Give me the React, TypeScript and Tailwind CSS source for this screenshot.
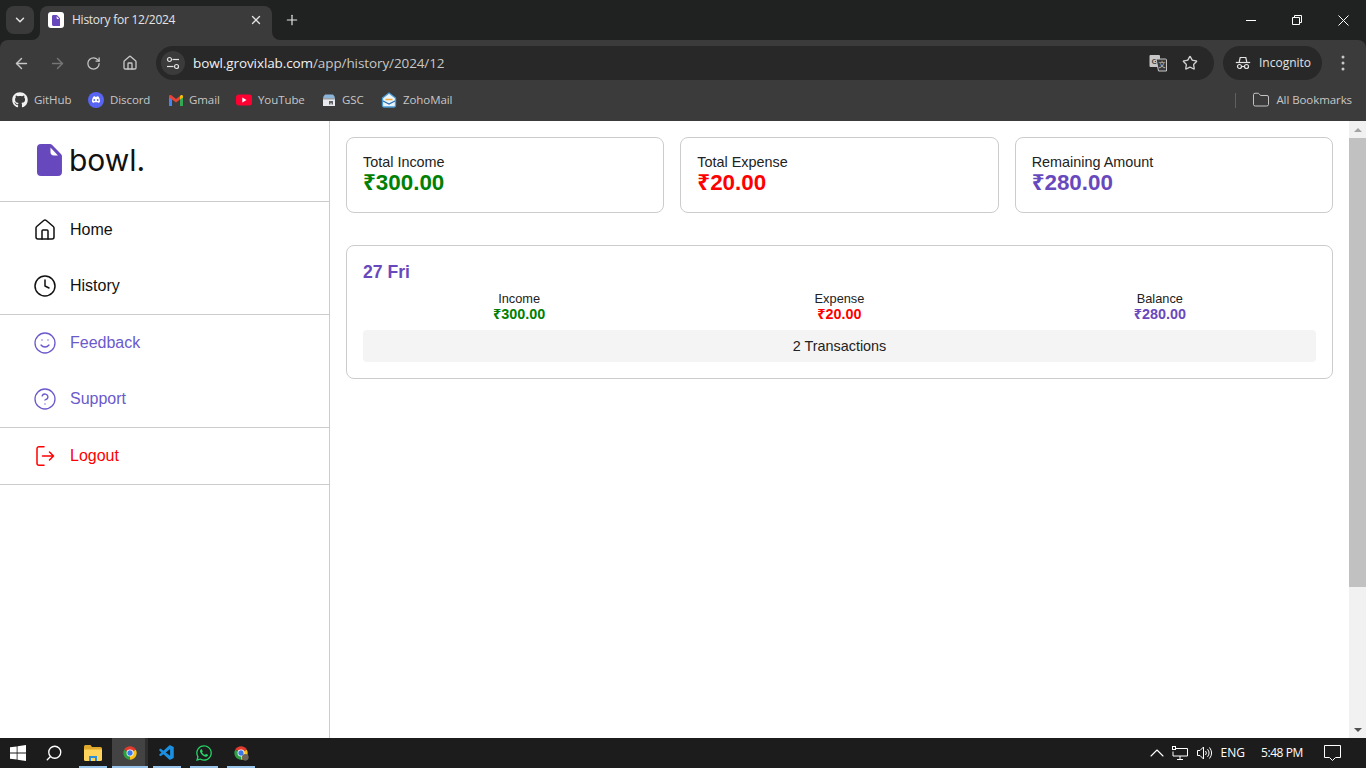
import React from "react";
import { ChevronDown, X, Plus, ArrowLeft, ArrowRight, RotateCw, House, Star, Clock, Smile, CircleHelp, Folder, ChevronUp, Search } from "lucide-react";
import { FaGithub, FaWhatsapp } from "react-icons/fa";
import { VscVscode } from "react-icons/vsc";

const ui = "font-['Open_Sans','Noto_Sans',sans-serif]";

function LogoGlyph({ size = 26, fold = "#ffffff" }: { size?: number; fold?: string }) {
  return (
    <svg width={size * 0.78} height={size} viewBox="0 0 25 32">
      <path d="M4 0h9a3 3 0 0 1 2.200 1l8.800 9a3 3 0 0 1 1 2v16a4 4 0 0 1-4 4H4a4 4 0 0 1-4-4V4a4 4 0 0 1 4-4z" fill="#6849bd" />
      <path d="M13.500 3.500L21 11.500h-4a3.500 3.500 0 0 1-3.500-3.500z" fill={fold} />
    </svg>
  );
}

function ChromeIcon({ size = 16, badge = false }: { size?: number; badge?: boolean }) {
  return (
    <svg width={size} height={size} viewBox="0 0 24 24">
      <path d="M12 12L3.340 7A10 10 0 0 1 20.660 7z" fill="#e33b2e" />
      <path d="M12 12L20.660 7A10 10 0 0 1 12 22z" fill="#fbc116" />
      <path d="M12 12L12 22A10 10 0 0 1 3.340 7z" fill="#2f9e44" />
      <circle cx="12" cy="12" r="5.200" fill="#fff" />
      <circle cx="12" cy="12" r="4" fill="#3b78e7" />
      {badge && <circle cx="18.500" cy="18.500" r="5" fill="#6b655c" />}
    </svg>
  );
}

function DiscordIcon() {
  return (
    <svg width="16" height="16" viewBox="0 0 16 16">
      <circle cx="8" cy="8" r="8" fill="#5865f2" />
      <path d="M5.300 4.700c.8-.3 1.300-.4 1.600-.4l.2.400h1.800l.2-.4c.3 0 .8.100 1.600.4 1 1.500 1.400 3.300 1.300 5.300-.6.500-1.300.8-2 1l-.5-.8c.3-.1.500-.2.700-.4-1.500.7-3 .7-4.400 0 .2.200.4.300.7.400l-.5.800c-.7-.2-1.400-.5-2-1-.1-2 .3-3.800 1.300-5.300z" fill="#fff" />
      <circle cx="6.300" cy="8" r=".9" fill="#5865f2" />
      <circle cx="9.700" cy="8" r=".9" fill="#5865f2" />
    </svg>
  );
}

function GmailIcon() {
  return (
    <svg width="14" height="11" viewBox="0 0 14 11">
      <path d="M0 1.500V11h3V4z" fill="#4285f4" />
      <path d="M14 1.500V11h-3V4z" fill="#34a853" />
      <path d="M0 1.500C0 .2 1.300-.4 2.300.3L7 3.900l4-3V4.500L7 7.500 3 4.500 0 2.500z" fill="#ea4335" />
      <path d="M11 .9l.7-.6c1-.7 2.300-.1 2.300 1.200v1L11 4.500z" fill="#fbbc04" />
    </svg>
  );
}

function YoutubeIcon() {
  return (
    <svg width="16" height="12" viewBox="0 0 16 12">
      <rect width="16" height="11" y=".5" rx="3" fill="#ff0033" />
      <path d="M6.300 3.500v5L10.500 6z" fill="#fff" />
    </svg>
  );
}

function GscIcon() {
  return (
    <svg width="14" height="14" viewBox="0 0 14 14">
      <path d="M1.500 3.500L3 1.500h8l1.500 2 .5 2.500H1z" fill="#8ab4d8" />
      <path d="M1 6h12v7H1z" fill="#e8eaed" />
      <path d="M1 5h12v1.500H1z" fill="#9aa0a6" />
      <path d="M7 8h4v3.500H9.500V10H8.500v1.500H7z" fill="#5f6368" />
    </svg>
  );
}

function ZohoIcon() {
  return (
    <svg width="16" height="16" viewBox="0 0 16 16">
      <path d="M1.500 6L8 1l6.500 5v7.500a1.500 1.500 0 0 1-1.500 1.500H3a1.500 1.500 0 0 1-1.500-1.500z" fill="#eaf4fb" stroke="#4a9bd8" strokeWidth="1.300" />
      <path d="M4.500 7.500h7" stroke="#f2a93b" strokeWidth="1.500" />
      <path d="M2 9l6 3 6-3" fill="none" stroke="#2a6fb0" strokeWidth="1.200" />
    </svg>
  );
}

function IncognitoIcon() {
  return (
    <svg width="16" height="16" viewBox="0 0 16 16" fill="none" stroke="#e3e3e3" strokeWidth="1.200">
      <path d="M4.200 7l1-4.500h5.600l1 4.500" />
      <path d="M.8 7.500h14.400" />
      <circle cx="4.500" cy="11.500" r="2" />
      <circle cx="11.500" cy="11.500" r="2" />
      <path d="M6.500 11.500h3" />
    </svg>
  );
}

function TranslateIcon() {
  return (
    <svg width="18" height="18" viewBox="0 0 18 18">
      <rect x="0.500" y="1" width="10.500" height="12" rx="1" fill="#c7c7c7" />
      <text x="5.500" y="10" fontSize="8" fontWeight="700" textAnchor="middle" fill="#444" fontFamily="Liberation Sans, sans-serif">G</text>
      <path d="M7 5h9.500a1 1 0 0 1 1 1v11h-8z" fill="#3b3b3b" stroke="#c7c7c7" strokeWidth="1" />
      <text x="13" y="13" fontSize="7" textAnchor="middle" fill="#c7c7c7" fontFamily="Noto Sans CJK SC, sans-serif">文</text>
    </svg>
  );
}

function TuneIcon() {
  return (
    <svg width="14" height="14" viewBox="0 0 14 14" fill="none" stroke="#e3e3e3" strokeWidth="1.200">
      <circle cx="3.500" cy="3.500" r="2" />
      <path d="M6.500 3.500H13" />
      <circle cx="10.500" cy="10.500" r="2" />
      <path d="M1 10.500h6.500" />
    </svg>
  );
}

function LogoutIcon() {
  return (
    <svg width="24" height="24" viewBox="0 0 24 24" fill="none" stroke="currentColor" strokeWidth="1.500" strokeLinecap="round" strokeLinejoin="round">
      <path d="M11 2.700H6a2 2 0 0 0-2 2v14.600a2 2 0 0 0 2 2h5" />
      <path d="M9.500 12h11M16.500 8l4 4-4 4" />
    </svg>
  );
}

function WindowsIcon() {
  return (
    <svg width="16" height="16" viewBox="0 0 16 16" fill="#fff">
      <path d="M0 2.300l6.700-.9v6.200H0zM7.500 1.300L16 0v7.600H7.500zM0 8.400h6.700v6.200L0 13.700zM7.500 8.400H16V16l-8.500-1.300z" />
    </svg>
  );
}

function FolderIcon() {
  return (
    <svg width="18" height="16" viewBox="0 0 18 16">
      <path d="M0 1.500A1.500 1.500 0 0 1 1.500 0h5L8 2h8.500A1.500 1.500 0 0 1 18 3.500V5H0z" fill="#e0a92b" />
      <path d="M0 4.500h18V14.500A1.500 1.500 0 0 1 16.500 16h-15A1.500 1.500 0 0 1 0 14.500z" fill="#ffd45c" />
      <path d="M5 11h8v5h-2v-3H7v3H5z" fill="#2e8fd6" />
    </svg>
  );
}

function NetworkIcon() {
  return (
    <svg width="16" height="14" viewBox="0 0 16 14" fill="none" stroke="#fff" strokeWidth="1">
      <path d="M4 2.500h11.500v7.500H1V5.500" />
      <path d="M8 10v3M5 13.500h6" />
      <rect x=".5" y=".5" width="3" height="3" fill="#1c1c1c" />
    </svg>
  );
}

function SpeakerIcon() {
  return (
    <svg width="16" height="14" viewBox="0 0 16 14" fill="none" stroke="#fff" strokeWidth="1">
      <path d="M.5 4.500h2.500L6.500 1v12L3 9.500H.5z" />
      <path d="M8.500 5a3 3 0 0 1 0 4M10.500 3.200a6 6 0 0 1 0 7.600M12.500 1.500a9 9 0 0 1 0 11" />
    </svg>
  );
}

function NotifyIcon() {
  return (
    <svg width="17" height="16" viewBox="0 0 17 16" fill="none" stroke="#fff" strokeWidth="1">
      <path d="M.5 .5h16v12h-5l-3 3-3-3h-5z" />
    </svg>
  );
}

const bookmarks = [
  { label: "GitHub", w: "w-[76px]", gap: "gap-[6px]", icon: <FaGithub size={16} color="#f1f1f1" /> },
  { label: "Discord", w: "w-[80px]", gap: "gap-[6px]", icon: <DiscordIcon /> },
  { label: "Gmail", w: "w-[68px]", gap: "gap-[5px]", icon: <GmailIcon /> },
  { label: "YouTube", w: "w-[85px]", gap: "gap-[6px]", icon: <YoutubeIcon /> },
  { label: "GSC", w: "w-[60px]", gap: "gap-[5px]", icon: <GscIcon /> },
  { label: "ZohoMail", w: "w-[80px]", gap: "gap-[6px]", icon: <ZohoIcon /> },
];

function BrowserChrome() {
  return (
    <header className={`shrink-0 bg-[#202221] ${ui}`}>
      <div className="flex h-10 items-end pl-[6px]">
        <div className="mb-[6px] flex h-7 w-7 items-center justify-center rounded-lg bg-[#3a3a3a]">
          <ChevronDown size={14} color="#e3e3e3" strokeWidth={2.500} />
        </div>
        <div className="relative ml-[6px] flex h-[34px] w-[232px] items-center rounded-t-lg bg-[#3b3b3b] pb-[6px] pl-2 pr-[9px] pt-0">
          <svg className="absolute -left-2 bottom-0" width="8" height="8" viewBox="0 0 8 8"><path d="M8 0v8H0a8 8 0 0 0 8-8z" fill="#3b3b3b" /></svg>
          <svg className="absolute -right-2 bottom-0" width="8" height="8" viewBox="0 0 8 8"><path d="M0 0v8h8a8 8 0 0 1-8-8z" fill="#3b3b3b" /></svg>
          <span className="flex h-4 w-4 items-center justify-center rounded-[3px] bg-white">
            <LogoGlyph size={11} />
          </span>
          <span className="ml-2 flex-1 text-xs text-[#e3e3e3] tracking-[-0.25px]">History for 12/2024</span>
          <X size={14} color="#e3e3e3" strokeWidth={2.200} />
        </div>
        <div className="mb-[6px] ml-[6px] flex h-7 w-7 items-center justify-center">
          <Plus size={16} color="#e3e3e3" strokeWidth={1.800} />
        </div>
        <div className="ml-auto flex h-full items-start text-white">
          <div className="flex h-10 w-[46px] items-center justify-center"><span className="h-px w-[10px] bg-white" /></div>
          <div className="flex h-10 w-[46px] items-center justify-center">
            <svg width="10" height="10" viewBox="0 0 10 10" fill="none" stroke="#fff"><path d="M.5 2.500h7v7h-7zM2.500 2.500v-2h7v7h-2" /></svg>
          </div>
          <div className="flex h-10 w-[46px] items-center justify-center">
            <svg width="11" height="11" viewBox="0 0 11 11" stroke="#fff"><path d="M.5 .5l10 10M10.500 .5l-10 10" /></svg>
          </div>
        </div>
      </div>
      <div className="rounded-t-lg bg-[#3b3b3b]">
        <div className="flex h-[41px] items-end px-[13px] pb-[1px]">
          <div className="flex h-[34px] w-[143px] items-center">
            <ArrowLeft size={17} color="#c7c7c7" className="w-[17px]" />
            <ArrowRight size={17} color="#757575" className="ml-[19px]" />
            <RotateCw size={15} color="#c7c7c7" className="ml-[20px]" />
            <House size={16} color="#c7c7c7" className="ml-[21px]" />
          </div>
          <div className="flex h-[34px] w-[1058px] items-center rounded-full bg-[#282828] pl-[5px] pr-[16px]">
            <span className="flex h-6 w-6 items-center justify-center rounded-full bg-[#3b3b3b]"><TuneIcon /></span>
            <span className="ml-2 flex-1 text-[13.500px] text-[#c7c7c7] tracking-[-0.1px]"><span className="text-[#f1f1f1]">bowl.grovixlab.com</span>/app/history/2024/12</span>
            <TranslateIcon />
            <Star size={16} color="#d0d0d0" className="ml-[15px]" />
          </div>
          <div className="ml-[9px] flex h-[34px] w-[99px] items-center gap-[8px] rounded-full bg-[#282828] pl-[12px]">
            <IncognitoIcon />
            <span className="text-xs text-[#e3e3e3]">Incognito</span>
          </div>
          <svg className="mb-[9px] ml-[19px]" width="4" height="16" viewBox="0 0 4 16" fill="#c7c7c7"><circle cx="2" cy="2" r="1.500" /><circle cx="2" cy="8" r="1.500" /><circle cx="2" cy="14" r="1.500" /></svg>
        </div>
        <div className="flex h-10 items-center pb-[2px] pl-3 pr-[14px]">
          {bookmarks.map((b) => (
            <div key={b.label} className={`flex items-center ${b.w} ${b.gap}`}>
              <span className="flex w-4 shrink-0 items-center justify-center">{b.icon}</span>
              <span className="text-[11.500px] text-[#c7c7c7] tracking-[-0.08px]">{b.label}</span>
            </div>
          ))}
          <span className="ml-auto h-[15px] w-px bg-[#5f5f5f]" />
          <Folder size={18} color="#c7c7c7" strokeWidth={1.300} className="ml-[16px]" />
          <span className="ml-[6px] text-[11.500px] text-[#c7c7c7] tracking-[-0.08px]">All Bookmarks</span>
        </div>
      </div>
    </header>
  );
}

function NavItem({ icon, label, color }: { icon: React.ReactNode; label: string; color: string }) {
  return (
    <div className={`flex h-14 items-center pl-[33px] text-base ${color}`}>
      <span className="flex w-6 shrink-0 justify-center">{icon}</span>
      <span className="ml-[13px]">{label}</span>
    </div>
  );
}

function Sidebar() {
  return (
    <aside className="flex w-[330px] shrink-0 flex-col border-r border-[#cccccc] bg-white">
      <div className="flex h-[81px] items-center gap-[7px] border-b border-[#cccccc] pb-[2px] pl-[37px]">
        <LogoGlyph size={32} />
        <span className="font-['Inter',sans-serif] text-[30px] leading-none text-[#111111]">bowl.</span>
      </div>
      <nav className="h-[113px] border-b border-[#cccccc]">
        <NavItem icon={<House size={24} strokeWidth={1.500} />} label="Home" color="text-[#111111]" />
        <NavItem icon={<Clock size={24} strokeWidth={1.500} />} label="History" color="text-[#111111]" />
      </nav>
      <nav className="h-[113px] border-b border-[#cccccc]">
        <NavItem icon={<Smile size={24} strokeWidth={1.300} />} label="Feedback" color="text-[#6a5acd]" />
        <NavItem icon={<CircleHelp size={24} strokeWidth={1.300} />} label="Support" color="text-[#6a5acd]" />
      </nav>
      <div className="h-[57px] border-b border-[#cccccc]">
        <NavItem icon={<LogoutIcon />} label="Logout" color="text-[#ff0000]" />
      </div>
    </aside>
  );
}

function Stat({ label, value, color }: { label: string; value: string; color: string }) {
  return (
    <div className="h-[76px] rounded-lg border border-[#cccccc] px-4 pt-[15px]">
      <div className="text-[14.400px] leading-[18px] text-[#222222]">{label}</div>
      <div className={`-mt-[1px] text-[22.400px] font-bold leading-[25px] ${color}`}>{value}</div>
    </div>
  );
}

function Column({ label, value, color }: { label: string; value: string; color: string }) {
  return (
    <div className="text-center">
      <div className="text-[12.800px] leading-[15px] text-[#222222]">{label}</div>
      <div className={`text-[14.400px] font-bold leading-[17px] ${color}`}>{value}</div>
    </div>
  );
}

function Main() {
  return (
    <main className="flex min-w-0 flex-1 flex-col gap-8 p-4 font-['Liberation_Sans','Noto_Sans',sans-serif]">
      <div className="grid grid-cols-3 gap-4">
        <Stat label="Total Income" value="₹300.00" color="text-[#008000]" />
        <Stat label="Total Expense" value="₹20.00" color="text-[#ff0000]" />
        <Stat label="Remaining Amount" value="₹280.00" color="text-[#6849bd]" />
      </div>
      <section className="h-[134px] rounded-lg border border-[#cccccc] px-4 pt-4">
        <h2 className="text-[17.600px] font-bold leading-[21px] text-[#6849bd]">27 Fri</h2>
        <div className="mt-2 grid grid-cols-3 gap-2">
          <Column label="Income" value="₹300.00" color="text-[#008000]" />
          <Column label="Expense" value="₹20.00" color="text-[#ff0000]" />
          <Column label="Balance" value="₹280.00" color="text-[#6849bd]" />
        </div>
        <div className="mt-[7px] flex h-8 items-center justify-center rounded bg-[#f4f4f4] pt-[2px] text-[14.400px] text-[#222222]">2 Transactions</div>
      </section>
    </main>
  );
}

function Scrollbar() {
  return (
    <div className="flex w-[17px] shrink-0 flex-col items-center bg-[#f1f1f1]">
      <div className="flex h-[17px] w-full items-center justify-center">
        <span className="h-0 w-0 border-x-[4px] border-b-[4px] border-x-transparent border-b-[#a3a3a3]" />
      </div>
      <div className="h-[449px] w-full bg-[#c1c1c1]" />
      <div className="flex-1" />
      <div className="flex h-[17px] w-full items-center justify-center">
        <span className="h-0 w-0 border-x-[4px] border-t-[4px] border-x-transparent border-t-[#505050]" />
      </div>
    </div>
  );
}

function TaskApp({ w, ml, active, children }: { w: string; ml: string; active?: boolean; children: React.ReactNode }) {
  return (
    <div className={`relative flex h-full items-center justify-center ${w} ${ml} ${active ? "bg-[#434343]" : ""}`}>
      {children}
      {active && <span className="absolute inset-y-0 right-0 w-[3px] bg-[#2e2e2e]" />}
      <span className="absolute inset-x-0 bottom-0 h-[2px] bg-[#99c4ec]" />
    </div>
  );
}

function Taskbar() {
  return (
    <footer className={`flex h-[30px] shrink-0 items-center bg-[#1c1c1c] text-white ${ui}`}>
      <span className="ml-[10px]"><WindowsIcon /></span>
      <Search size={18} color="#fff" strokeWidth={1.800} className="ml-[19px] -scale-x-100" />
      <TaskApp w="w-[28px]" ml="ml-[16px]"><FolderIcon /></TaskApp>
      <TaskApp w="w-[36px]" ml="ml-[5px]" active><ChromeIcon /></TaskApp>
      <TaskApp w="w-[28px]" ml="ml-[5px]"><VscVscode size={18} color="#1b8fe0" /></TaskApp>
      <TaskApp w="w-[28px]" ml="ml-[9px]"><FaWhatsapp size={18} color="#25d366" /></TaskApp>
      <TaskApp w="w-[28px]" ml="ml-[9px]"><ChromeIcon badge /></TaskApp>
      <div className="ml-auto flex items-center pr-[25px]">
        <ChevronUp size={24} strokeWidth={1.100} color="#fff" />
        <span className="ml-[3px]"><NetworkIcon /></span>
        <span className="ml-[9px]"><SpeakerIcon /></span>
        <span className="ml-[7px] text-xs">ENG</span>
        <span className="ml-[16px] text-xs tracking-[-0.4px]">5:48 PM</span>
        <span className="ml-[21px]"><NotifyIcon /></span>
      </div>
    </footer>
  );
}

export default function App() {
  return (
    <div className="flex h-screen w-full flex-col overflow-hidden bg-white font-['Liberation_Sans',Arial,sans-serif]">
      <BrowserChrome />
      <div className="flex min-h-0 flex-1">
        <Sidebar />
        <Main />
        <Scrollbar />
      </div>
      <Taskbar />
    </div>
  );
}
